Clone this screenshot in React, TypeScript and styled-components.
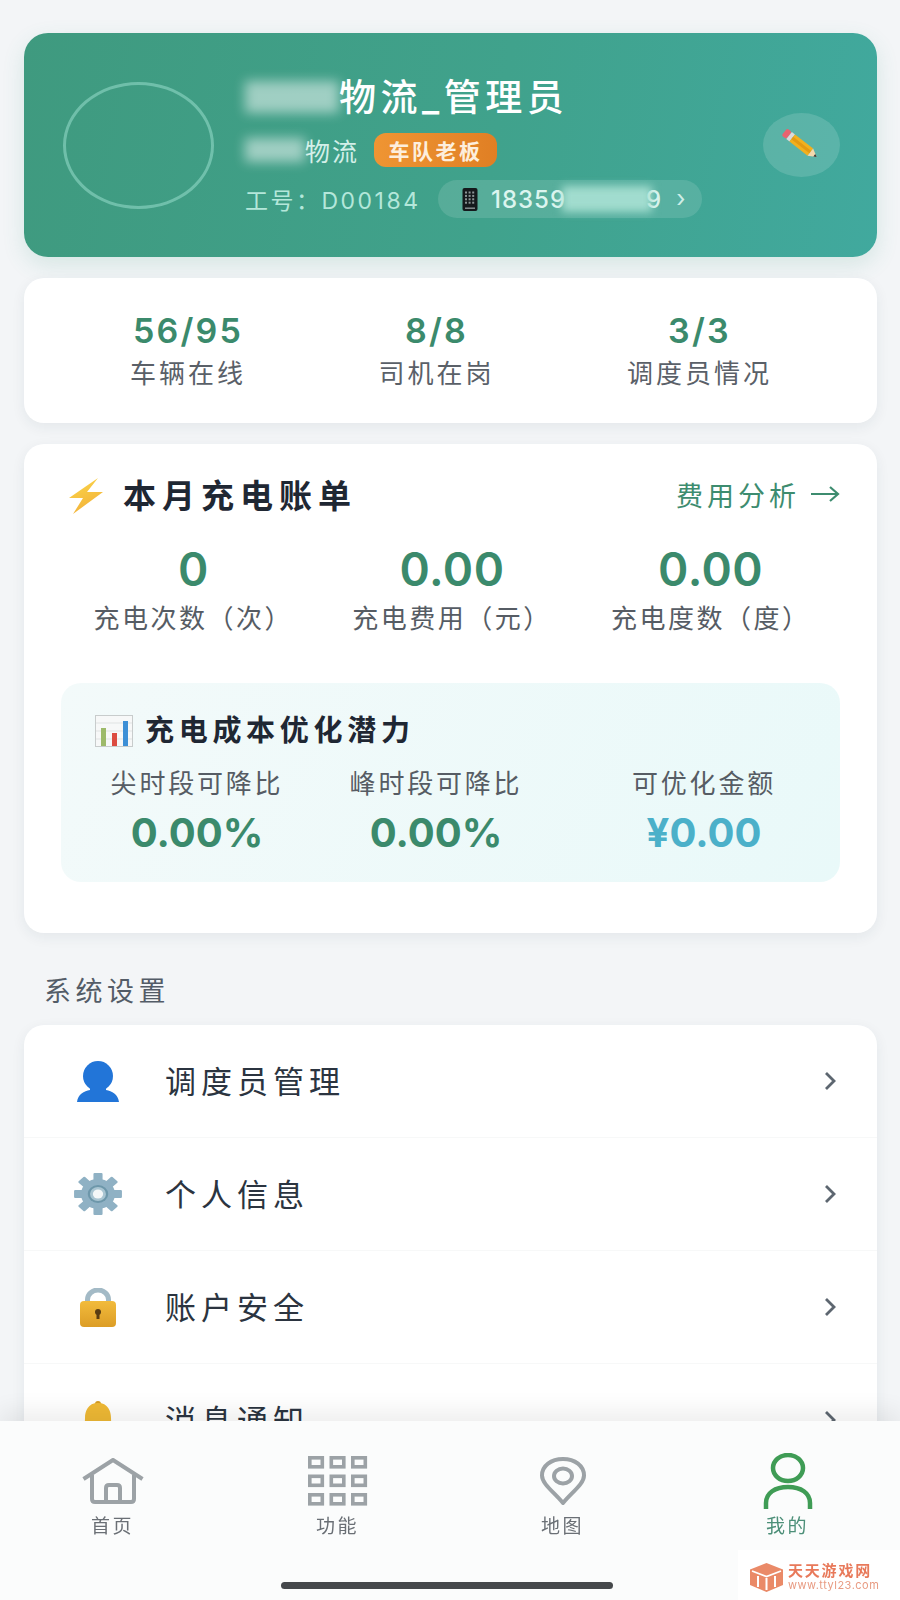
import styled, { createGlobalStyle } from 'styled-components';

const GlobalStyle = createGlobalStyle`
  html, body {
    margin: 0;
    padding: 0;
    height: 1600px;
    overflow: hidden;
    background: #f3f5f7;
    font-family: Inter, "Noto Sans CJK SC", sans-serif;
  }
`;

const stats = [
  { value: '56/95', label: '车辆在线' },
  { value: '8/8', label: '司机在岗' },
  { value: '3/3', label: '调度员情况' },
];

const bills = [
  { value: '0', label: '充电次数（次）' },
  { value: '0.00', label: '充电费用（元）' },
  { value: '0.00', label: '充电度数（度）' },
];

const potentials = [
  { value: '0.00%', label: '尖时段可降比', cyan: false },
  { value: '0.00%', label: '峰时段可降比', cyan: false },
  { value: '¥0.00', label: '可优化金额', cyan: true },
];

const PencilIcon = () => (
  <svg width="40" height="34" viewBox="0 0 40 34">
    <g transform="rotate(38 20 17)">
      <rect x="-2" y="13" width="6" height="9" rx="2" fill="#e8636f" />
      <rect x="4" y="13" width="4" height="9" fill="#d9d9d9" />
      <rect x="8" y="13" width="23" height="9" fill="#f2b01e" />
      <rect x="8" y="16" width="23" height="3" fill="#e49a12" />
      <polygon points="31,13 31,22 39,17.5" fill="#f4d9ae" />
      <polygon points="36,16 36,19 39,17.5" fill="#333" />
    </g>
  </svg>
);

const PhoneIcon = () => (
  <svg width="16" height="23" viewBox="0 0 16 23">
    <rect x="0.5" y="0" width="15" height="23" rx="2" fill="#15191c" />
    {[0, 1, 2, 3].map((row) =>
      [0, 1, 2].map((col) => (
        <rect key={`${row}-${col}`} x={3 + col * 3.6} y={3.5 + row * 3.4} width="2" height="2" fill="#8b9496" />
      )),
    )}
    <rect x="3" y="19.5" width="10" height="1.4" fill="#8b9496" />
  </svg>
);

const BoltIcon = () => (
  <svg width="36" height="36" viewBox="0 0 36 36">
    <defs>
      <linearGradient id="bolt" x1="0" y1="0" x2="0.4" y2="1">
        <stop offset="0" stopColor="#fbd84a" />
        <stop offset="1" stopColor="#f3b33b" />
      </linearGradient>
    </defs>
    <polygon points="30,0 1,20 15,20 5,36 35,14 19,14" fill="url(#bolt)" />
  </svg>
);

const ChartIcon = () => (
  <svg width="38" height="32" viewBox="0 0 38 32">
    <rect x="0.5" y="0.5" width="37" height="31" fill="#f7f8f8" stroke="#c8cccc" />
    <line x1="1" y1="8" x2="37" y2="8" stroke="#e0e3e3" />
    <line x1="1" y1="16" x2="37" y2="16" stroke="#e0e3e3" />
    <line x1="1" y1="24" x2="37" y2="24" stroke="#e0e3e3" />
    <rect x="6" y="13" width="5" height="18" fill="#9dba6a" />
    <rect x="17" y="18" width="5" height="13" fill="#dc4b40" />
    <rect x="28" y="6" width="5" height="25" fill="#3d8fd6" />
  </svg>
);

const ArrowIcon = () => (
  <svg width="30" height="20" viewBox="0 0 30 20" fill="none" stroke="#3d8c6f" strokeWidth="2.2">
    <path d="M1 10h27M20 3l8 7-8 7" />
  </svg>
);

const PersonEmoji = () => (
  <svg width="42" height="41" viewBox="0 0 42 41">
    <ellipse cx="21" cy="15" rx="15" ry="15" fill="#2275d8" />
    <path d="M13 26h16v3c6 1 12 4 13 12H0c1-8 7-11 13-12z" fill="#2275d8" />
  </svg>
);

const GearEmoji = () => (
  <svg width="48" height="42" viewBox="0 0 48 42">
    <g transform="translate(24 21) scale(1.14 1)">
      {[0, 45, 90, 135, 180, 225, 270, 315].map((deg) => (
        <rect key={deg} x="-4" y="-21" width="8" height="10" rx="1" fill="#8fb1c4" transform={`rotate(${deg})`} />
      ))}
      <circle r="15" fill="#8fb1c4" />
      <circle r="9" fill="#6d97aa" />
      <circle r="7" fill="#a9c5d2" />
      <circle r="4.5" fill="#f4f7f8" />
    </g>
  </svg>
);

const LockEmoji = () => (
  <svg width="36" height="39" viewBox="0 0 36 39">
    <defs>
      <linearGradient id="lockBody" x1="0" y1="0" x2="0" y2="1">
        <stop offset="0" stopColor="#f2bb3c" />
        <stop offset="1" stopColor="#dc9d26" />
      </linearGradient>
    </defs>
    <path d="M7.500 15V11.500a10.500 9.500 0 0 1 21 0V15" fill="none" stroke="#a3bac6" strokeWidth="5" />
    <rect x="0" y="13" width="36" height="26" rx="4" fill="url(#lockBody)" />
    <circle cx="18" cy="24" r="3" fill="#5a3d12" />
    <rect x="16.500" y="25" width="3" height="6" fill="#5a3d12" />
  </svg>
);

const BellEmoji = () => (
  <svg width="34" height="38" viewBox="0 0 34 38">
    <circle cx="17" cy="3" r="3" fill="#d59b22" />
    <path d="M17 2C7 2 4 10 4 17c0 7-2 11-4 13h34c-2-2-4-6-4-13 0-7-3-15-13-15z" fill="#efb935" />
    <circle cx="17" cy="33" r="4" fill="#c98d1c" />
  </svg>
);

const Chevron = () => (
  <svg width="13" height="20" viewBox="0 0 13 20">
    <path d="M2 2l8 8-8 8" fill="none" stroke="#5d6670" strokeWidth="2.800" />
  </svg>
);

const HomeIcon = () => (
  <svg width="62" height="46" viewBox="0 0 62 46" fill="none" stroke="#9ca2a6" strokeWidth="4" strokeLinejoin="round">
    <path d="M1.500 21L31 2l29.500 19" />
    <path d="M10 17v24q0 3 3 3h36q3 0 3-3V17" />
    <path d="M24 44V30q0-3 3-3h8q3 0 3 3v14" />
  </svg>
);

const GridIcon = () => (
  <svg width="60" height="50" viewBox="0 0 60 50" fill="none" stroke="#9ca2a6" strokeWidth="3.600">
    {[0, 1, 2].map((row) =>
      [0, 1, 2].map((col) => (
        <rect key={`${row}-${col}`} x={1.8 + col * 21.5} y={1.8 + row * 18.5} width="12.500" height="9" />
      )),
    )}
  </svg>
);

const PinIcon = () => (
  <svg width="46" height="49" viewBox="0 0 46 49" fill="none" stroke="#9ca2a6" strokeWidth="4">
    <path d="M23 46C14 35 2 27 2 18.500C2 9 11 2 23 2s21 7 21 16.500C44 27 32 35 23 46z" strokeLinejoin="round" />
    <ellipse cx="23" cy="19" rx="9" ry="7.500" />
  </svg>
);

const UserIcon = () => (
  <svg width="50" height="56" viewBox="0 0 50 56" fill="none" stroke="#3f9c55" strokeWidth="4.500">
    <ellipse cx="25" cy="15" rx="15" ry="13" />
    <path d="M3 56V50C3 40 12 34 25 34s22 6 22 16v6" />
  </svg>
);

const WatermarkLogo = () => (
  <svg width="33" height="29" viewBox="0 0 33 29">
    <polygon points="16.500,0 33,6.500 33,22 16.500,29 0,22 0,6.500" fill="#ea8a68" />
    <path d="M2 8l14.500 5.500L31 8" fill="none" stroke="#fff" strokeWidth="1.800" />
    <path d="M8 13v11M16.500 15v12M25 13v11" fill="none" stroke="#fff" strokeWidth="2" />
  </svg>
);

export default function App() {
  return (
    <>
      <GlobalStyle />
      <Page>
        <HeaderCard>
          <Avatar />
          <Info>
            <TitleLine>
              <Mask $w={94} $h={32} />
              <Title>物流_管理员</Title>
            </TitleLine>
            <CompanyLine>
              <Mask $w={60} $h={24} />
              <Company>物流</Company>
              <Badge>车队老板</Badge>
            </CompanyLine>
            <IdLine>
              <EmployeeNo>工号：D00184</EmployeeNo>
              <PhonePill>
                <PhoneIcon />
                <PhoneNumber>
                  18359
                  <PhoneMask $w={90} $h={26} />9
                </PhoneNumber>
                <PillArrow>›</PillArrow>
              </PhonePill>
            </IdLine>
          </Info>
          <EditButton>
            <PencilIcon />
          </EditButton>
        </HeaderCard>

        <StatsCard>
          {stats.map((s) => (
            <StatItem key={s.label}>
              <StatValue>{s.value}</StatValue>
              <StatLabel>{s.label}</StatLabel>
            </StatItem>
          ))}
        </StatsCard>

        <BillCard>
          <BillHeader>
            <BillTitleWrap>
              <BoltIcon />
              <BillTitle>本月充电账单</BillTitle>
            </BillTitleWrap>
            <BillLink>
              费用分析
              <ArrowIcon />
            </BillLink>
          </BillHeader>
          <BillGrid>
            {bills.map((b) => (
              <BillItem key={b.label}>
                <BillValue>{b.value}</BillValue>
                <BillLabel>{b.label}</BillLabel>
              </BillItem>
            ))}
          </BillGrid>
          <PotentialBox>
            <PotentialTitle>
              <ChartIcon />
              <span>充电成本优化潜力</span>
            </PotentialTitle>
            <PotentialGrid>
              {potentials.map((p) => (
                <PotentialItem key={p.label}>
                  <PotentialLabel>{p.label}</PotentialLabel>
                  <PotentialValue $cyan={p.cyan}>{p.value}</PotentialValue>
                </PotentialItem>
              ))}
            </PotentialGrid>
          </PotentialBox>
        </BillCard>

        <SectionLabel>系统设置</SectionLabel>

        <MenuCard>
          <MenuRow>
            <MenuIcon><PersonEmoji /></MenuIcon>
            <MenuText>调度员管理</MenuText>
            <Chevron />
          </MenuRow>
          <MenuRow>
            <MenuIcon><GearEmoji /></MenuIcon>
            <MenuText>个人信息</MenuText>
            <Chevron />
          </MenuRow>
          <MenuRow>
            <MenuIcon><LockEmoji /></MenuIcon>
            <MenuText>账户安全</MenuText>
            <Chevron />
          </MenuRow>
          <MenuRow>
            <MenuIcon><BellEmoji /></MenuIcon>
            <MenuText>消息通知</MenuText>
            <Chevron />
          </MenuRow>
        </MenuCard>
      </Page>

      <TabBar>
        <TabItem>
          <TabIcon><HomeIcon /></TabIcon>
          <TabLabel>首页</TabLabel>
        </TabItem>
        <TabItem>
          <TabIcon><GridIcon /></TabIcon>
          <TabLabel>功能</TabLabel>
        </TabItem>
        <TabItem>
          <TabIcon><PinIcon /></TabIcon>
          <TabLabel>地图</TabLabel>
        </TabItem>
        <TabItem>
          <TabIcon><UserIcon /></TabIcon>
          <TabLabel $active>我的</TabLabel>
        </TabItem>
        <HomeIndicator />
        <Watermark>
          <WatermarkLogo />
          <WatermarkText>
            <WatermarkName>天天游戏网</WatermarkName>
            <WatermarkUrl>www.ttyl23.com</WatermarkUrl>
          </WatermarkText>
        </Watermark>
      </TabBar>
    </>
  );
}

const Page = styled.div`
  box-sizing: border-box;
  width: 900px;
  height: 1600px;
  padding: 33px 23px 0 24px;
  overflow: hidden;
`;

const HeaderCard = styled.div`
  display: flex;
  align-items: center;
  box-sizing: border-box;
  height: 224px;
  padding: 0 37px 0 39px;
  border-radius: 24px;
  background: linear-gradient(100deg, #3f9a7f 0%, #40a28c 55%, #41a99e 100%);
  box-shadow: 0 8px 22px rgba(63, 155, 128, 0.16);
`;

const Avatar = styled.div`
  box-sizing: border-box;
  width: 151px;
  height: 127px;
  border: 3px solid rgba(170, 235, 220, 0.45);
  border-radius: 50%;
  flex-shrink: 0;
`;

const Info = styled.div`
  display: flex;
  flex-direction: column;
  margin-left: 31px;
  padding-top: 3px;
`;

const Mask = styled.span<{ $w: number; $h: number }>`
  display: inline-block;
  width: ${(p) => p.$w}px;
  height: ${(p) => p.$h}px;
  background: rgba(255, 255, 255, 0.5);
  filter: blur(6px);
  vertical-align: middle;
`;

const PhoneMask = styled(Mask)`
  margin: 0 -6px 0 -4px;
  background: rgba(170, 225, 212, 0.9);
  filter: blur(4px);
`;

const TitleLine = styled.div`
  display: flex;
  align-items: center;
  height: 44px;
`;

const Title = styled.span`
  margin-top: 2px;
  font-size: 37px;
  font-weight: 500;
  letter-spacing: 4.500px;
  color: #fff;
  line-height: 44px;
  white-space: nowrap;
`;

const CompanyLine = styled.div`
  display: flex;
  align-items: center;
  height: 34px;
  margin-top: 14px;
`;

const Company = styled.span`
  font-size: 25px;
  letter-spacing: 2px;
  color: #d3efe8;
`;

const Badge = styled.span`
  display: flex;
  align-items: center;
  justify-content: center;
  width: 123px;
  height: 34px;
  margin-left: 15px;
  border-radius: 12px;
  background: linear-gradient(90deg, #ef9533, #e07f24);
  font-size: 21px;
  font-weight: 700;
  letter-spacing: 2.500px;
  color: #fdeedd;
`;

const IdLine = styled.div`
  display: flex;
  align-items: center;
  height: 38px;
  margin-top: 13px;
`;

const EmployeeNo = styled.span`
  width: 193px;
  font-size: 23px;
  letter-spacing: 2.500px;
  color: #b4e7da;
  white-space: nowrap;
`;

const PhonePill = styled.div`
  display: flex;
  align-items: center;
  box-sizing: border-box;
  width: 264px;
  height: 38px;
  padding-left: 24px;
  border-radius: 19px;
  background: rgba(255, 255, 255, 0.12);
`;

const PhoneNumber = styled.span`
  display: flex;
  align-items: center;
  margin-left: 13px;
  font-size: 24px;
  font-weight: 500;
  letter-spacing: 1px;
  color: #dcf5ef;
`;

const PillArrow = styled.span`
  margin-left: 14px;
  font-size: 24px;
  line-height: 24px;
  color: #cfeee7;
`;

const EditButton = styled.div`
  display: flex;
  align-items: center;
  justify-content: center;
  width: 77px;
  height: 64px;
  margin-left: auto;
  border-radius: 50%;
  background: rgba(255, 255, 255, 0.14);
`;

const StatsCard = styled.div`
  display: flex;
  justify-content: space-between;
  box-sizing: border-box;
  height: 145px;
  margin-top: 21px;
  padding: 33px 105px 0 106px;
  border-radius: 20px;
  background: #fff;
  box-shadow: 0 4px 14px rgba(30, 60, 70, 0.07);
`;

const StatItem = styled.div`
  display: flex;
  flex-direction: column;
  align-items: center;
`;

const StatValue = styled.div`
  font-size: 34px;
  font-weight: 600;
  letter-spacing: 2.200px;
  line-height: 40px;
  color: #3b8a6c;
`;

const StatLabel = styled.div`
  margin-top: 7px;
  font-size: 26px;
  letter-spacing: 3px;
  line-height: 32px;
  color: #5a6068;
`;

const BillCard = styled.div`
  box-sizing: border-box;
  height: 489px;
  margin-top: 21px;
  padding: 32px 37px 0;
  border-radius: 20px;
  background: #fff;
  box-shadow: 0 4px 14px rgba(30, 60, 70, 0.07);
`;

const BillHeader = styled.div`
  display: flex;
  align-items: center;
  justify-content: space-between;
  height: 40px;
`;

const BillTitleWrap = styled.div`
  display: flex;
  align-items: center;
  gap: 19px;
  padding-left: 7px;
`;

const BillTitle = styled.span`
  margin-bottom: 5px;
  font-size: 33px;
  font-weight: 600;
  letter-spacing: 6px;
  color: #1f2733;
`;

const BillLink = styled.span`
  display: flex;
  align-items: center;
  gap: 10px;
  margin-bottom: 4px;
  font-size: 27px;
  letter-spacing: 4px;
  color: #3d8c6f;
`;

const BillGrid = styled.div`
  display: grid;
  grid-template-columns: repeat(3, 1fr);
  margin-top: 28px;
  padding-left: 3px;
`;

const BillItem = styled.div`
  display: flex;
  flex-direction: column;
  align-items: center;
`;

const BillValue = styled.div`
  font-size: 46px;
  font-weight: 600;
  letter-spacing: 0.500px;
  line-height: 50px;
  color: #3b8a6c;
`;

const BillLabel = styled.div`
  margin-top: 10px;
  font-size: 26px;
  letter-spacing: 2.500px;
  line-height: 30px;
  white-space: nowrap;
  color: #565c64;
`;

const PotentialBox = styled.div`
  box-sizing: border-box;
  height: 199px;
  margin-top: 49px;
  padding: 30px 64px 0 34px;
  border-radius: 20px;
  background: linear-gradient(120deg, #f3fafa, #e9f9f9);
`;

const PotentialTitle = styled.div`
  display: flex;
  align-items: center;
  gap: 12px;
  height: 36px;
  font-size: 29px;
  font-weight: 600;
  letter-spacing: 4.700px;
  line-height: 32px;
  color: #1f2733;
`;

const PotentialGrid = styled.div`
  display: grid;
  grid-template-columns: 170px 170px 1fr;
  column-gap: 69px;
  margin-top: 20px;
  padding-left: 17px;
`;

const PotentialItem = styled.div`
  display: flex;
  flex-direction: column;
  align-items: center;

  &:last-child {
    justify-self: end;
  }
`;

const PotentialLabel = styled.div`
  font-size: 26px;
  letter-spacing: 2.800px;
  line-height: 30px;
  white-space: nowrap;
  color: #565c64;
`;

const PotentialValue = styled.div<{ $cyan: boolean }>`
  margin-top: 12px;
  font-size: 40px;
  font-weight: 700;
  letter-spacing: 0;
  line-height: 44px;
  color: ${(p) => (p.$cyan ? '#4bb0c9' : '#3b8a6c')};
`;

const SectionLabel = styled.div`
  margin-top: 42px;
  padding-left: 20px;
  font-size: 27px;
  letter-spacing: 4.500px;
  line-height: 34px;
  color: #535c67;
`;

const MenuCard = styled.div`
  margin-top: 16px;
  border-radius: 20px;
  background: #fff;
  box-shadow: 0 4px 14px rgba(30, 60, 70, 0.07);
`;

const MenuRow = styled.div`
  display: flex;
  align-items: center;
  box-sizing: border-box;
  height: 113px;
  padding: 0 40px 0 50px;
  border-bottom: 1px solid #f7f8f8;
`;

const MenuIcon = styled.div`
  display: flex;
  align-items: center;
  justify-content: center;
  width: 48px;
  flex-shrink: 0;
`;

const MenuText = styled.span`
  flex: 1;
  margin-left: 43px;
  margin-bottom: 3px;
  font-size: 31px;
  letter-spacing: 5px;
  color: #2b3440;
`;

const TabBar = styled.div`
  position: fixed;
  left: 0;
  right: 0;
  bottom: 0;
  display: grid;
  grid-template-columns: repeat(4, 1fr);
  box-sizing: border-box;
  height: 179px;
  padding-top: 32px;
  background: #fbfcfc;
  box-shadow: 0 -10px 22px rgba(0, 0, 0, 0.07);
`;

const TabItem = styled.div`
  display: flex;
  flex-direction: column;
  align-items: center;
`;

const TabIcon = styled.div`
  display: flex;
  align-items: center;
  justify-content: center;
  height: 56px;
`;

const TabLabel = styled.span<{ $active?: boolean }>`
  margin-top: 9px;
  font-size: 19px;
  letter-spacing: 2.500px;
  line-height: 18px;
  color: ${(p) => (p.$active ? '#4c8f78' : '#6a6f75')};
`;

const HomeIndicator = styled.div`
  position: absolute;
  left: 281px;
  bottom: 11px;
  width: 332px;
  height: 7px;
  border-radius: 4px;
  background: #45484b;
`;

const Watermark = styled.div`
  position: absolute;
  right: 0;
  bottom: 0;
  display: flex;
  align-items: center;
  gap: 5px;
  box-sizing: border-box;
  width: 162px;
  height: 50px;
  padding: 4px 0 0 12px;
  background: #fff;
`;

const WatermarkText = styled.div`
  display: flex;
  flex-direction: column;
`;

const WatermarkName = styled.span`
  font-size: 15px;
  font-weight: 700;
  letter-spacing: 1.800px;
  line-height: 16px;
  color: #e8795a;
`;

const WatermarkUrl = styled.span`
  font-size: 11px;
  letter-spacing: 0.500px;
  line-height: 12px;
  color: #e89b82;
`;
